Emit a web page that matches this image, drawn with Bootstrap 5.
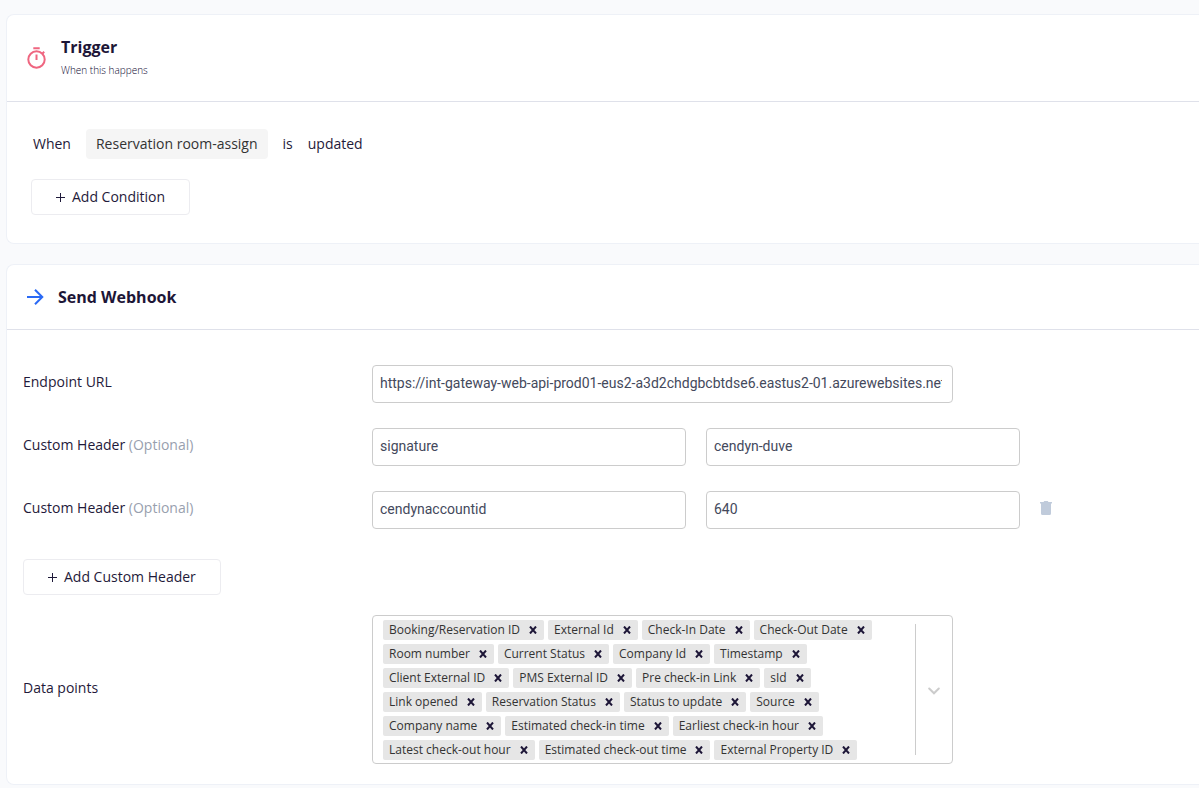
<!DOCTYPE html>
<html lang="en">
<head>
<meta charset="utf-8">
<meta name="viewport" content="width=device-width, initial-scale=1">
<title>Webhook automation</title>
<link href="https://cdn.jsdelivr.net/npm/bootstrap@5.3.0/dist/css/bootstrap.min.css" rel="stylesheet">
<style>
  body { background: #f9fafc; color: #1f1a3a; font-family: "Open Sans", sans-serif; font-size: 14px; line-height: 20px; }
  main { padding: 14px 0 0 6px; gap: 20px; }
  .panel { border: 1px solid #eef1f7; border-right: 0; border-radius: 8px 0 0 8px; background: #fff; }
  .panel-head { border-bottom: 1px solid #dfe1ea; padding: 20px; gap: 14px; }
  .panel-title { font-size: 16px; line-height: 24px; font-weight: 700; color: #1d1637; margin: 0; }
  .panel-sub { font-size: 10px; line-height: 16px; padding: 3px 0; font-weight: 300; color: #0c0730; }
  .trigger-body { padding: 27px 24px 28px; }
  .trigger-line { gap: 15px; padding-left: 2px; margin-bottom: 20px; }
  .entity { background: #f5f5f5; color: #333; border-radius: 4px; padding: 5px 10px; }
  .btn-add { --bs-btn-color: #1f1a3a; --bs-btn-border-color: #ececf0; --bs-btn-bg: #fff; --bs-btn-border-radius: 4px;
    --bs-btn-font-size: 14px; --bs-btn-line-height: 20px; --bs-btn-padding-y: 7px; --bs-btn-padding-x: 24px; gap: 7px; }
  .webhook-body { padding: 35px 0 20px 16px; }
  .form-grid { display: grid; grid-template-columns: 329fr 314fr 314fr 159fr; column-gap: 20px; row-gap: 25px; align-items: center; }
  .span-two { grid-column: 2 / span 2; max-width: 581px; }
  .form-label { margin: 0; padding-bottom: 4px; }
  .optional { color: #98a0ae; }
  .add-header { margin: 30px 0 20px; }
  .webhook-body .form-control { height: 38px; padding: 6px 10px 8px 7px; border-color: #ccc; border-radius: 4px; color: #44495c; font: 14px/20px Roboto, sans-serif; }
  .picker { border: 1px solid #ccc; border-radius: 4px; }
  .picker-values { padding: 4px 8px 3px 10px; gap: 4px; }
  .chip { background: #e6e6e6; color: #333; border-radius: 2px; font-size: 12px; line-height: 20px; padding-left: 6px; }
  .chip button { width: 24px; height: 20px; color: #1d1637; padding-left: 2px; }
  .picker-toggle { width: 37px; color: #ccc; margin: 8px 0; border: 0; border-left: 1px solid #ccc; background: none; }
  .delete { --bs-btn-color: #c0cbdb; justify-self: start; padding: 0 0 4px; border: 0; }
</style>
</head>
<body>
<main class="d-flex flex-column">
  <section class="panel">
    <header class="panel-head d-flex align-items-center">
      <svg class="flex-shrink-0" width="20" height="22" viewBox="0 0 20 22" fill="none" stroke="#ef6680" stroke-width="2" aria-hidden="true"><circle cx="9.5" cy="12.5" r="8.2"/><path d="M6.3 1.2h6.4M9.5 7.500v5.500M15.300 6.700l1.900-1.900"/></svg>
      <div>
        <h2 class="panel-title">Trigger</h2>
        <div class="panel-sub">When this happens</div>
      </div>
    </header>
    <div class="trigger-body">
      <div class="trigger-line d-flex align-items-center">
        <span>When</span><span class="entity">Reservation room-assign</span><span>is</span><span>updated</span>
      </div>
      <button type="button" class="btn btn-add d-inline-flex align-items-center"><svg width="9" height="9" viewBox="0 0 9 9" stroke="currentColor" aria-hidden="true"><path d="M0 4.500h9M4.500 0v9"/></svg>Add Condition</button>
    </div>
  </section>

  <section class="panel">
    <header class="panel-head d-flex align-items-center">
      <svg class="flex-shrink-0" width="17" height="16" viewBox="0 0 17 16" fill="none" stroke="#2a6af5" stroke-width="2" aria-hidden="true"><path d="M0 8h15.500M8 .7L15.300 8 8 15.300"/></svg>
      <h2 class="panel-title">Send Webhook</h2>
    </header>
    <form class="webhook-body">
      <div class="form-grid">
        <label class="form-label" for="endpoint">Endpoint URL</label>
        <input id="endpoint" class="form-control span-two" type="text" value="https://int-gateway-web-api-prod01-eus2-a3d2chdgbcbtdse6.eastus2-01.azurewebsites.net">
        <span></span>

        <label class="form-label" for="header1">Custom Header <span class="optional">(Optional)</span></label>
        <input id="header1" class="form-control" type="text" value="signature">
        <input class="form-control" type="text" value="cendyn-duve" aria-label="Header value">
        <span></span>

        <label class="form-label" for="header2">Custom Header <span class="optional">(Optional)</span></label>
        <input id="header2" class="form-control" type="text" value="cendynaccountid">
        <input class="form-control" type="text" value="640" aria-label="Header value">
        <button type="button" class="delete btn d-flex" aria-label="Delete header"><svg width="12" height="14" viewBox="0 0 12 14" fill="currentColor" aria-hidden="true"><path d="M0 1h3.500l.8-1h3.400l.8 1H12v1.600H11V12.500q0 1.500-1.500 1.500h-7Q1 14 1 12.500V2.600H0z"/></svg></button>
      </div>

      <button type="button" class="btn btn-add d-inline-flex align-items-center add-header"><svg width="9" height="9" viewBox="0 0 9 9" stroke="currentColor" aria-hidden="true"><path d="M0 4.500h9M4.500 0v9"/></svg>Add Custom Header</button>

      <div class="form-grid">
        <div class="form-label" id="points-label">Data points</div>
        <div class="picker span-two d-flex" role="group" aria-labelledby="points-label">
          <ul class="picker-values list-unstyled d-flex flex-wrap flex-grow-1 mb-0" id="points"></ul>
          <button type="button" class="picker-toggle flex-shrink-0 p-0" aria-label="Show data points"><svg width="12" height="8" viewBox="0 0 12 8" fill="none" stroke="currentColor" stroke-width="2" stroke-linecap="round" aria-hidden="true"><path d="M1.200 1.500L6 6.300l4.800-4.800"/></svg></button>
        </div>
      </div>
    </form>
  </section>
</main>
<script>
  const points = ["Booking/Reservation ID", "External Id", "Check-In Date", "Check-Out Date", "Room number", "Current Status",
    "Company Id", "Timestamp", "Client External ID", "PMS External ID", "Pre check-in Link", "sId", "Link opened",
    "Reservation Status", "Status to update", "Source", "Company name", "Estimated check-in time", "Earliest check-in hour",
    "Latest check-out hour", "Estimated check-out time", "External Property ID"];
  document.getElementById("points").innerHTML = points.map(p =>
    `<li class="chip d-flex">${p}<button type="button" class="btn border-0 py-0 pe-0 d-flex align-items-center justify-content-center" aria-label="Remove ${p}"><svg width="8" height="8" viewBox="0 0 8 8" stroke="currentColor" stroke-width="2" aria-hidden="true"><path d="M1 .5l6 7M7 .5l-6 7"/></svg></button></li>`).join("");
</script>
<script src="https://cdn.jsdelivr.net/npm/bootstrap@5.3.0/dist/js/bootstrap.bundle.min.js"></script>
</body>
</html>
